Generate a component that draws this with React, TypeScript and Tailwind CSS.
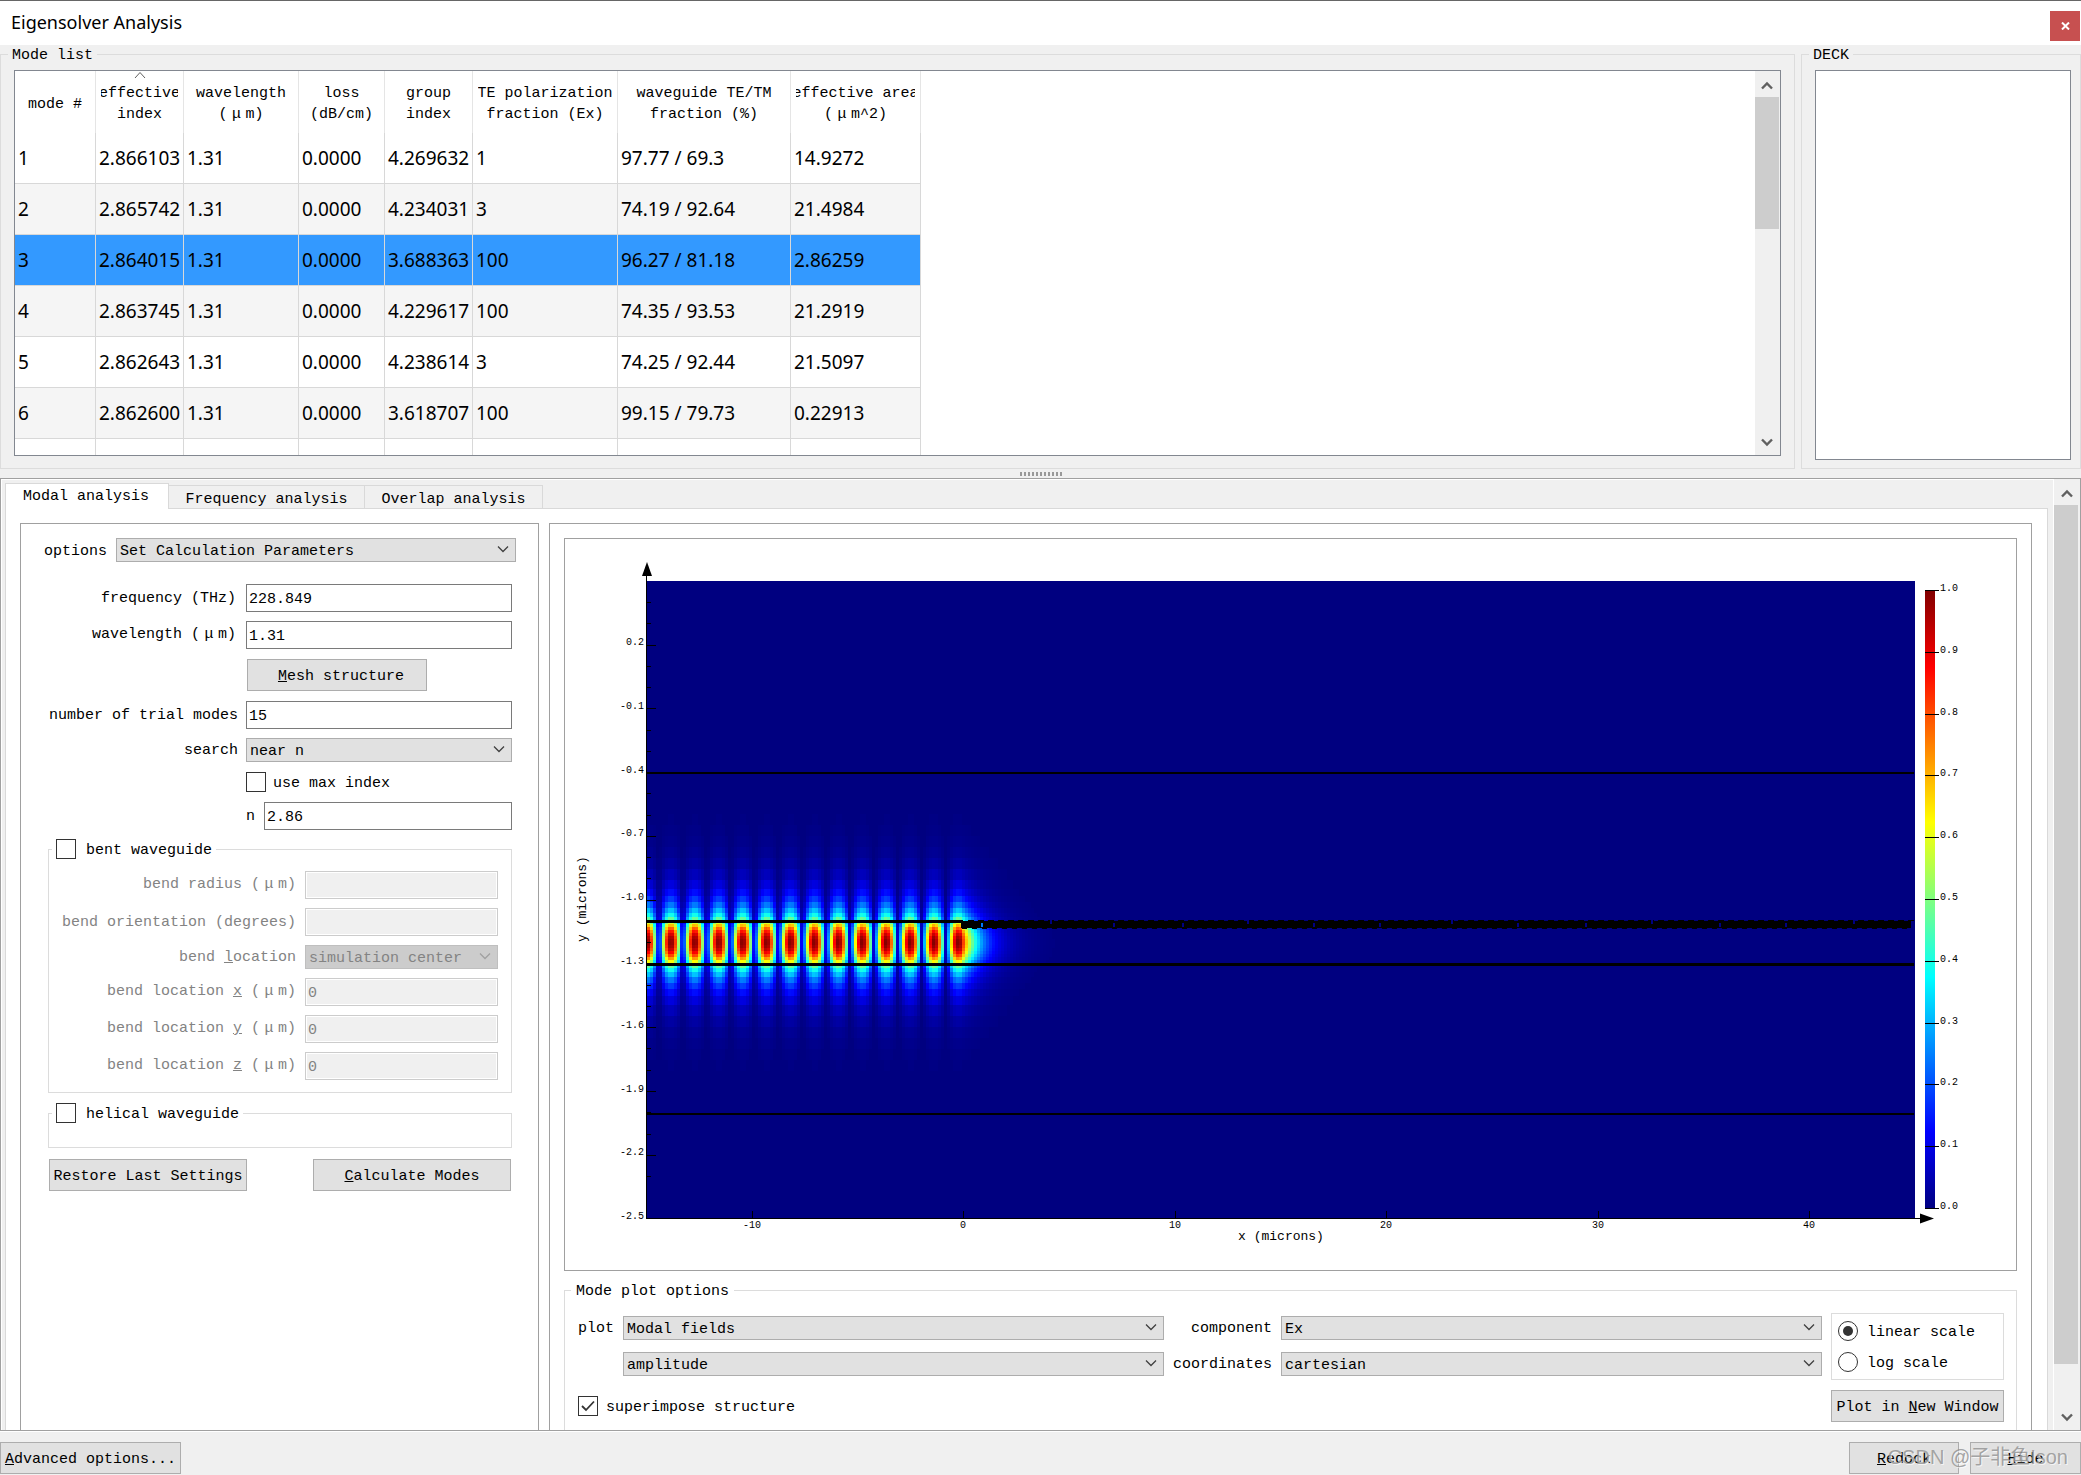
import { useId, type ReactNode } from "react";

const columns = [
  { lines: ["mode #"], width: 81 },
  { lines: ["effective", "index"], width: 88, sorted: true },
  { lines: ["wavelength", "(µm)"], width: 115 },
  { lines: ["loss", "(dB/cm)"], width: 86 },
  { lines: ["group", "index"], width: 88 },
  { lines: ["TE polarization", "fraction (Ex)"], width: 145 },
  { lines: ["waveguide TE/TM", "fraction (%)"], width: 173 },
  { lines: ["effective area", "(µm^2)"], width: 130 },
];

const modes = [
  ["1", "2.866103", "1.31", "0.0000", "4.269632", "1", "97.77 / 69.3", "14.9272"],
  ["2", "2.865742", "1.31", "0.0000", "4.234031", "3", "74.19 / 92.64", "21.4984"],
  ["3", "2.864015", "1.31", "0.0000", "3.688363", "100", "96.27 / 81.18", "2.86259"],
  ["4", "2.863745", "1.31", "0.0000", "4.229617", "100", "74.35 / 93.53", "21.2919"],
  ["5", "2.862643", "1.31", "0.0000", "4.238614", "3", "74.25 / 92.44", "21.5097"],
  ["6", "2.862600", "1.31", "0.0000", "3.618707", "100", "99.15 / 79.73", "0.22913"],
  ["", "", "", "", "", "", "", ""],
];

const SELECTED_MODE = "3";

// Full-width micro sign, as the CJK system font draws it
function Mu() {
  return <span className="inline-block w-[18px] text-center">μ</span>;
}

function withMu(text: string) {
  const [before, after] = text.split("µ");
  return after === undefined ? text : <>{before}<Mu />{after}</>;
}

function Chevron({ className, up = false, thick = false }: { className?: string; up?: boolean; thick?: boolean }) {
  return (
    <svg className={className} width="12" height="12" viewBox="0 0 12 12" fill="none" stroke="currentColor" strokeWidth={thick ? 2.4 : 1.3}>
      <path d={up ? "M1 8.5 L6 3.5 L11 8.5" : "M1 3.5 L6 8.5 L11 3.5"} />
    </svg>
  );
}

function ScrollBar({ thumb, className }: { thumb: string; className: string }) {
  return (
    <div className={`flex shrink-0 flex-col items-center bg-[#f0f0f0] text-[#606060] ${className}`}>
      <button type="button" aria-label="Scroll up" className="flex h-[26px] w-full shrink-0 items-center justify-center pr-px pt-1">
        <Chevron up thick />
      </button>
      <div className="w-full flex-1">
        <div className={`w-[24px] bg-[#cdcdcd] ${thumb}`} />
      </div>
      <button type="button" aria-label="Scroll down" className="flex h-[26px] w-full shrink-0 items-center justify-center pr-px">
        <Chevron thick />
      </button>
    </div>
  );
}

function Button({ children, className = "" }: { children: ReactNode; className?: string }) {
  return (
    <button type="button" className={`h-8 whitespace-nowrap border border-[#adadad] bg-[#e1e1e1] pt-[3px] ${className}`}>
      {children}
    </button>
  );
}

function Select({ id, value, disabled = false, className = "" }: { id?: string; value: string; disabled?: boolean; className?: string }) {
  return (
    <div className={`relative h-6 ${className}`}>
      <select
        id={id}
        aria-label={id ? undefined : value}
        disabled={disabled}
        className="h-full w-full appearance-none border border-[#adadad] bg-[#e1e1e1] pl-[3px] pt-[3px] opacity-100 disabled:border-[#bfbfbf] disabled:bg-[#cccccc] disabled:text-[#838383]"
      >
        <option>{value}</option>
      </select>
      <Chevron className={`pointer-events-none absolute right-[7px] top-[5px] ${disabled ? "text-[#a0a0a0]" : "text-[#404040]"}`} />
    </div>
  );
}

function TextField({ id, value, disabled = false, className = "w-full" }: { id: string; value: string; disabled?: boolean; className?: string }) {
  return (
    <input
      id={id}
      type="text"
      defaultValue={value}
      disabled={disabled}
      className={`h-7 min-w-0 border border-[#7a7a7a] bg-white px-[2px] pt-[2px] disabled:border-[#cccccc] disabled:bg-[#f0f0f0] disabled:text-[#838383] disabled:shadow-[inset_0_0_0_1px_white] ${className}`}
    />
  );
}

function CheckBox({ label, checked = false, className = "" }: { label: string; checked?: boolean; className?: string }) {
  const id = useId();
  return (
    <div className={`flex h-5 items-center ${className}`}>
      <span className="relative size-5">
        <input id={id} type="checkbox" defaultChecked={checked} className="peer block size-5 appearance-none border border-[#333] bg-white" />
        <svg className="pointer-events-none absolute inset-0 hidden peer-checked:block" width="20" height="20" viewBox="0 0 20 20" fill="none" stroke="#333" strokeWidth="1.8">
          <path d="M4 10 L8 14 L16 5.5" />
        </svg>
      </span>
      <label htmlFor={id} className="pt-[3px]">{label}</label>
    </div>
  );
}

function RadioButton({ label, checked = false }: { label: string; checked?: boolean }) {
  const id = useId();
  return (
    <div className="flex h-5 items-center gap-[9px]">
      <span className="relative size-5">
        <input id={id} type="radio" name="scale" defaultChecked={checked} className="peer block size-5 appearance-none rounded-full border border-[#333] bg-white" />
        <span className="pointer-events-none absolute inset-[5px] hidden rounded-full bg-[#333] peer-checked:block" />
      </span>
      <label htmlFor={id} className="pt-[3px]">{label}</label>
    </div>
  );
}

function ModeTable() {
  return (
    <table className="w-[906px] shrink-0 table-fixed border-separate border-spacing-0">
      <thead>
        <tr>
          {columns.map((column) => (
            <th
              key={column.lines[0]}
              className="relative h-[62px] border-r border-[#e5e5e5] px-[5px] pt-1 align-middle font-normal leading-[21px]"
              style={{ width: column.width }}
            >
              {column.sorted && (
                <svg className="absolute left-[38px] top-0" width="12" height="8" viewBox="0 0 12 8" fill="none" stroke="#606060">
                  <path d="M1 7 L6 1.5 L11 7" />
                </svg>
              )}
              {column.lines.map((line) => (
                <div key={line} className="flex justify-center overflow-hidden whitespace-nowrap">
                  <span>{withMu(line)}</span>
                </div>
              ))}
            </th>
          ))}
        </tr>
      </thead>
      <tbody className="font-['Noto_Sans','Open_Sans',sans-serif] text-[19px]">
        {modes.map((mode, index) => (
          <tr
            key={index}
            className={mode[0] === SELECTED_MODE ? "bg-[#3399ff]" : index % 2 ? "bg-[#f5f5f5]" : "bg-white"}
          >
            {mode.map((value, cell) => (
              <td key={cell} className="h-[51px] whitespace-nowrap border-b border-r border-[#d8d8d8] pl-[3px]">
                {value}
              </td>
            ))}
          </tr>
        ))}
      </tbody>
    </table>
  );
}

// ---- field plot ----

const PLOT = { left: 82, top: 42, right: 1350, bottom: 680 };
const CORE = { top: 382, bottom: 425, end: 393 };
const LOBE_PITCH = 23.93;
const CELL = 3;
const CLADDING_STEPS = [4, 4, 5, 6, 6, 7, 9, 11, 11, 11, 11, 11, 11];

function jet(value: number) {
  const channel = (center: number) =>
    Math.round(255 * Math.min(1, Math.max(0, 1.5 - Math.abs(4 * value - center))));
  return `rgb(${channel(3)},${channel(2)},${channel(1)})`;
}

function buildBands() {
  const bands: { y: number; height: number; strength: number }[] = [];
  let distance = 0;
  CLADDING_STEPS.forEach((height) => {
    const strength = 0.53 * Math.exp(-0.047 * (distance + height / 2));
    bands.push({ y: CORE.top - distance - height, height, strength });
    bands.push({ y: CORE.bottom + distance, height, strength });
    distance += height;
  });
  const middle = (CORE.top + CORE.bottom) / 2;
  for (let y = CORE.top; y < CORE.bottom; y += CELL) {
    const height = Math.min(CELL, CORE.bottom - y);
    bands.push({ y, height, strength: Math.cos((y + height / 2 - middle) / 21.5) });
  }
  return bands;
}

function lobe(x: number) {
  if (x > CORE.end + 2) {
    return Math.exp(-(x - CORE.end - 2) / 17);
  }
  return Math.abs(Math.cos((Math.PI * (x - CORE.end)) / LOBE_PITCH));
}

const bands = buildBands();
const cells = Array.from({ length: 152 }, (_, i) => PLOT.left + i * CELL);
const yTicks = ["0.2", "-0.1", "-0.4", "-0.7", "-1.0", "-1.3", "-1.6", "-1.9", "-2.2", "-2.5"];
const xTicks = ["-10", "0", "10", "20", "30", "40"];
const barTicks = ["1.0", "0.9", "0.8", "0.7", "0.6", "0.5", "0.4", "0.3", "0.2", "0.1", "0.0"];
const notches = [416, 485, 548, 617, 682, 748, 814, 886, 952, 1020, 1086, 1154, 1220, 1288];

function FieldPlot() {
  return (
    <svg className="block w-full font-['Liberation_Mono',monospace]" viewBox="0 0 1451 731" role="img" aria-label="Ex amplitude">
      <defs>
        <linearGradient id="jet" x1="0" y1="1" x2="0" y2="0">
          <stop offset="0" stopColor="#000080" />
          <stop offset="0.125" stopColor="#0000ff" />
          <stop offset="0.375" stopColor="#00ffff" />
          <stop offset="0.625" stopColor="#ffff00" />
          <stop offset="0.875" stopColor="#ff0000" />
          <stop offset="1" stopColor="#800000" />
        </linearGradient>
      </defs>

      <g shapeRendering="crispEdges">
        <rect x={PLOT.left} y={PLOT.top} width={PLOT.right - PLOT.left} height={PLOT.bottom - PLOT.top} fill="#000080" />
        {bands.map((band) =>
          cells.map((x) => {
            const value = band.strength * lobe(x + CELL / 2);
            return value < 0.004 ? null : (
              <rect key={`${x}-${band.y}`} x={x} y={band.y} width={CELL} height={band.height} fill={jet(value)} />
            );
          }),
        )}

        {/* structure outline */}
        <rect x="82" y="233" width="1267" height="2" />
        <rect x="82" y="381" width="316" height="3" />
        <rect x="82" y="424" width="1267" height="3" />
        <rect x="82" y="574" width="1267" height="2" />
        <rect x="396" y="382" width="950" height="7" />
        <path d="M403 381.500 H1349" stroke="#000" strokeDasharray="6 4" />
        <path d="M397 389.500 H1346" stroke="#000" strokeDasharray="5 5" />
        {notches.map((x, i) => (
          <rect key={x} x={x} y={i % 3 === 1 ? 381 : 384} width="2" height="4" fill={i ? "#000080" : "#0078ff"} />
        ))}

        {/* axes */}
        <rect x="81" y="36" width="1" height="644" />
        <rect x="81" y="679" width="1275" height="1" />
        {Array.from({ length: 28 }, (_, i) => (
          <rect key={i} x="82" y={Math.round(63 + i * 21.26)} width={i % 3 === 2 ? 9 : 4} height="1" />
        ))}
        {xTicks.map((tick, i) => (
          <rect key={tick} x={Math.round(187 + i * 211.4)} y="672" width="1" height="8" />
        ))}
        <rect x="1360" y="51" width="10" height="619" fill="url(#jet)" />
        {barTicks.map((tick, i) => (
          <rect key={tick} x="1360" y={Math.round(51 + i * 61.8)} width="14" height="1" />
        ))}
      </g>
      <path d="M82 23 L87 37 H77 Z" />
      <path d="M1369 679.500 L1355 684.500 V674.500 Z" />

      <g fontSize="10">
        {yTicks.map((tick, i) => (
          <text key={tick} x="79" y={Math.round(106 + i * 63.8)} textAnchor="end">{tick}</text>
        ))}
        {xTicks.map((tick, i) => (
          <text key={tick} x={Math.round(187 + i * 211.4)} y="689" textAnchor="middle">{tick}</text>
        ))}
        {barTicks.map((tick, i) => (
          <text key={tick} x="1375" y={Math.round(52 + i * 61.8)} textAnchor="start">{tick}</text>
        ))}
      </g>
      <g fontSize="13" textAnchor="middle">
        <text x="716" y="701">x (microns)</text>
        <text transform="translate(21 360) rotate(-90)">y (microns)</text>
      </g>
    </svg>
  );
}

function CalculationForm() {
  return (
    <div className="mt-[22px] flex flex-col pl-[27px] pr-[26px]">
      <div className="grid grid-cols-[190px_1fr] items-center gap-x-2 gap-y-[9px] whitespace-nowrap">
        <label htmlFor="frequency" className="pr-[2px] pt-[2px] text-right">frequency (THz)</label>
        <TextField id="frequency" value="228.849" />
        <label htmlFor="wavelength" className="pr-[2px] text-right">wavelength (<Mu />m)</label>
        <TextField id="wavelength" value="1.31" />
        <Button className="col-start-2 my-px ml-px w-[180px] pl-2"><u>M</u>esh structure</Button>
        <label htmlFor="trial" className="pt-[2px] text-right">number of trial modes</label>
        <TextField id="trial" value="15" />
        <label htmlFor="search" className="pt-[2px] text-right">search</label>
        <Select id="search" value="near n" />
        <CheckBox label="use max index" className="col-start-2 my-px gap-[7px]" />
        <div className="col-start-2 flex items-center">
          <label htmlFor="n" className="w-[18px] pt-[2px]">n</label>
          <TextField id="n" value="2.86" className="flex-1" />
        </div>
      </div>

      <fieldset className="mt-[9px] border border-[#dcdcdc] pb-3 pr-[13px]">
        <legend className="ml-[3px] bg-white pl-1 pr-1">
          <CheckBox label="bent waveguide" className="gap-[10px]" />
        </legend>
        <div className="mt-3 grid grid-cols-[1fr_193px] items-center gap-x-[9px] gap-y-[9px] whitespace-nowrap text-right text-[#838383]">
          <label htmlFor="radius">bend radius (<Mu />m)</label>
          <TextField id="radius" value="" disabled />
          <label htmlFor="orientation" className="pt-[2px]">bend orientation (degrees)</label>
          <TextField id="orientation" value="" disabled />
          <label htmlFor="location" className="pt-[2px]">bend <u>l</u>ocation</label>
          <Select id="location" value="simulation center" disabled />
          <label htmlFor="location-x">bend location <u>x</u> (<Mu />m)</label>
          <TextField id="location-x" value="0" disabled />
          <label htmlFor="location-y">bend location <u>y</u> (<Mu />m)</label>
          <TextField id="location-y" value="0" disabled />
          <label htmlFor="location-z">bend location <u>z</u> (<Mu />m)</label>
          <TextField id="location-z" value="0" disabled />
        </div>
      </fieldset>

      <fieldset className="mt-[10px] border border-[#dcdcdc] pb-6">
        <legend className="ml-[3px] bg-white pl-1 pr-1">
          <CheckBox label="helical waveguide" className="gap-[10px]" />
        </legend>
      </fieldset>

      <div className="mt-[11px] flex justify-between px-px">
        <Button className="w-[198px]">Restore Last Settings</Button>
        <Button className="w-[198px]"><u>C</u>alculate Modes</Button>
      </div>
    </div>
  );
}

function PlotOptions() {
  return (
    <fieldset className="mt-[10px] shrink-0 border border-[#dcdcdc] pb-4">
      <legend className="ml-[6px] h-[18px] px-[5px] leading-[22px]">Mode plot options</legend>
      <div className="flex gap-[9px] pl-[13px] pr-3">
        <div className="flex-1 pt-[17px]">
          <div className="grid grid-cols-[36px_1fr_99px_1fr] items-center gap-x-[9px] gap-y-3">
            <label htmlFor="plot" className="pt-[2px]">plot</label>
            <Select id="plot" value="Modal fields" />
            <label htmlFor="component" className="pt-[2px] text-right">component</label>
            <Select id="component" value="Ex" />
            <Select value="amplitude" className="col-start-2" />
            <label htmlFor="coordinates" className="pt-[2px] text-right">coordinates</label>
            <Select id="coordinates" value="cartesian" />
          </div>
          <CheckBox label="superimpose structure" checked className="mt-5 gap-2" />
        </div>
        <div className="flex w-[173px] flex-col gap-[10px] pt-[14px]">
          <div className="flex h-[67px] flex-col gap-[11px] border border-[#dcdcdc] pl-[6px] pt-[7px]">
            <RadioButton label="linear scale" checked />
            <RadioButton label="log scale" />
          </div>
          <Button>Plot in <u>N</u>ew Window</Button>
        </div>
      </div>
    </fieldset>
  );
}

export default function App() {
  return (
    <div className="flex h-screen flex-col overflow-hidden border-t border-[#666] bg-[#f0f0f0] font-['Liberation_Mono','Noto_Sans_CJK_SC',monospace] text-[15px] leading-5 text-black">
      <header className="flex h-11 shrink-0 items-center justify-between bg-white pl-[11px] pr-px">
        <h1 className="pb-[2px] font-['Noto_Sans','Open_Sans',sans-serif] text-[18px]">Eigensolver Analysis</h1>
        <button type="button" aria-label="Close" className="mt-[6px] flex size-[30px] items-center justify-center bg-[#c75050]">
          <svg width="9" height="8" viewBox="0 0 9 8" stroke="#fff" strokeWidth="2">
            <path d="M1 0.500 L8 7.500 M8 0.500 L1 7.500" />
          </svg>
        </button>
      </header>

      <section className="flex shrink-0 gap-[6px]">
        <fieldset className="min-w-0 flex-1 border border-[#dcdcdc] px-[13px] pb-3">
          <legend className="-ml-[6px] h-[18px] px-1 leading-[22px]">Mode list</legend>
          <div className="mt-[7px] flex h-[386px] justify-between overflow-hidden border border-[#828790] bg-white">
            <ModeTable />
            <ScrollBar thumb="h-[132px]" className="w-[25px]" />
          </div>
        </fieldset>
        <fieldset className="w-[280px] border border-[#dcdcdc] pb-2 pl-[13px] pr-[9px]">
          <legend className="-ml-[6px] h-[18px] px-1 leading-[22px]">DECK</legend>
          <div className="mt-[7px] h-[390px] border border-[#828790] bg-white" />
        </fieldset>
      </section>

      <div className="flex h-[9px] shrink-0 items-center justify-center">
        <div className="h-1 w-[42px] border-y-2 border-dotted border-[#999]" />
      </div>

      <main className="flex min-h-0 flex-1 overflow-hidden border border-[#a0a0a0]">
        <div className="flex min-w-0 flex-1 flex-col border-l border-t border-white pl-[3px] pr-[5px] pt-[3px]">
          <div role="tablist" className="flex h-[25px] shrink-0 items-end">
            <button type="button" role="tab" aria-selected="true" className="relative z-10 -mb-px h-[26px] w-[164px] border border-b-0 border-[#d9d9d9] bg-white pr-[2px] pt-px">
              Modal analysis
            </button>
            <button type="button" role="tab" aria-selected="false" className="h-[23px] w-[196px] border-r border-t border-[#d9d9d9] pt-1">
              Frequency analysis
            </button>
            <button type="button" role="tab" aria-selected="false" className="h-[23px] w-[178px] border-r border-t border-[#d9d9d9] pt-1">
              Overlap analysis
            </button>
          </div>
          <div role="tabpanel" className="flex min-h-0 flex-1 gap-[10px] overflow-hidden border border-b-0 border-[#d9d9d9] bg-white pl-[14px] pr-[15px] pt-[14px]">
            <section className="w-[519px] shrink-0 overflow-hidden border border-b-0 border-[#a0a0a0]">
              <div className="mt-[14px] flex items-center pl-[23px] pr-[22px]">
                <label htmlFor="options" className="w-[72px] pt-[3px]">options</label>
                <Select id="options" value="Set Calculation Parameters" className="flex-1" />
              </div>
              <CalculationForm />
            </section>
            <section className="flex min-w-0 flex-1 flex-col overflow-hidden border border-b-0 border-[#a0a0a0] px-[14px] pt-[14px]">
              <div className="shrink-0 border border-[#a0a0a0]">
                <FieldPlot />
              </div>
              <PlotOptions />
            </section>
          </div>
        </div>
        <ScrollBar thumb="h-[859px]" className="w-[27px] border-l border-white" />
      </main>

      <footer className="relative flex h-11 shrink-0 items-start gap-[11px] border-t border-white pt-[10px]">
        <Button className="mr-auto w-[181px]"><u>A</u>dvanced options...</Button>
        <Button className="w-[110px]"><u>R</u>edock</Button>
        <Button className="w-[111px]"><u>H</u>ide</Button>
        <span className="pointer-events-none absolute right-[13px] top-[10px] whitespace-nowrap font-['Liberation_Sans','Noto_Sans_CJK_SC',sans-serif] text-[20px] leading-[30px] text-[#909090]/80 [text-shadow:1px_1px_0_#ffffffaa]">
          CSDN @子非鱼Ison
        </span>
      </footer>
    </div>
  );
}
